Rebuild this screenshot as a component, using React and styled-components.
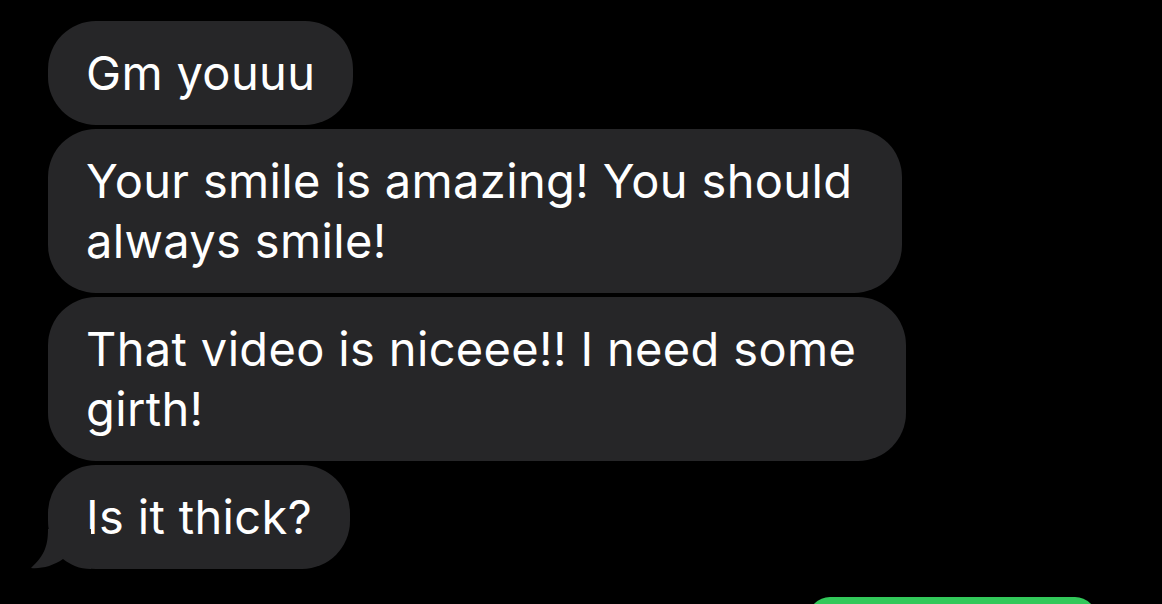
import styled, { createGlobalStyle } from 'styled-components';

const GlobalStyle = createGlobalStyle`
  html, body {
    margin: 0;
    padding: 0;
    background: #000;
    overflow: hidden;
  }
`;

const Thread = styled.div`
  display: flex;
  flex-direction: column;
  align-items: flex-start;
  gap: 4px;
  padding: 21px 65px 0 48px;
  height: 604px;
  box-sizing: border-box;
  font-family: Inter, "Liberation Sans", sans-serif;
`;

const Bubble = styled.div`
  position: relative;
  box-sizing: border-box;
  padding: 22px ${(p) => (p.$wrapped ? '50px' : '38px')} 22px 38px;
  border-radius: 48px;
  background: ${(p) => (p.$mine ? '#32c85a' : '#262628')};
  color: #fff;
  font-size: 47px;
  line-height: 60px;
  letter-spacing: 0.35px;
  white-space: nowrap;
  align-self: ${(p) => (p.$mine ? 'flex-end' : 'flex-start')};
  margin-top: ${(p) => (p.$mine ? '24px' : '0')};
`;

const Line = styled.span`
  display: block;
`;

const Tail = styled.svg`
  position: absolute;
  left: -17px;
  bottom: 0;
  width: 60px;
  height: 40px;
`;

const GreenBubble = styled(Bubble)`
  width: 289px;
  height: 104px;
`;

const messages = [
  ['Gm youuu'],
  ['Your smile is amazing! You should', 'always smile!'],
  ['That video is niceee!! I need some', 'girth!'],
  ['Is it thick?'],
];

function App() {
  return (
    <>
      <GlobalStyle />
      <Thread>
        {messages.map((lines, i) => (
          <Bubble key={i} $wrapped={lines.length > 1}>
            {i === messages.length - 1 && (
              <Tail viewBox="0 0 60 40">
                <path
                  d="M17 0 C17 16 14 26 0 39 C10 40 22 37 32 30 C40 36 48 40 60 40 L60 0 Z"
                  fill="#262628"
                />
              </Tail>
            )}
            {lines.map((l) => (
              <Line key={l}>{l}</Line>
            ))}
          </Bubble>
        ))}
        <GreenBubble $mine />
      </Thread>
    </>
  );
}

export default App;
